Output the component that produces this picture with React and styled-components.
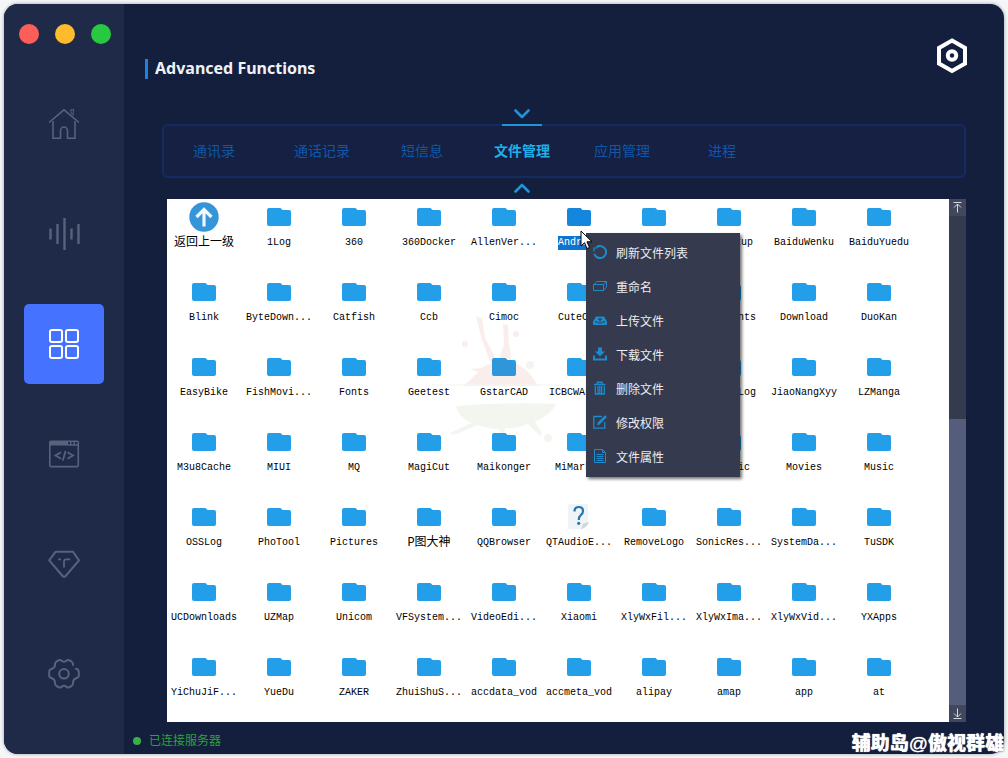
import React from "react";
import styled, { createGlobalStyle, css } from "styled-components";

const sans = `"Liberation Sans", "Noto Sans CJK SC", sans-serif`;

const Global = createGlobalStyle`
  *, *::before, *::after { box-sizing: border-box; }
  body { margin: 0; background: #f4f6f7; font-family: ${sans}; }
  button { margin: 0; padding: 0; border: 0; background: none; font-family: inherit; color: inherit; }
`;

const Page = styled.div`
  min-height: 100vh;
  padding: 4px;
  display: flex;
`;

const Window = styled.div`
  position: relative;
  flex: 1;
  display: flex;
  border-radius: 14px;
  background: #141f3d;
  box-shadow: 0 0 3px 1px #b9c2c4;
`;

const Sidebar = styled.aside`
  flex: 0 0 120px;
  display: flex;
  flex-direction: column;
  align-items: center;
  gap: 40px;
  padding: 20px 0;
  background: #1f2a48;
  border-radius: 14px 0 0 14px;
`;

const Lights = styled.div`
  display: flex;
  gap: 16px;
  align-self: flex-start;
  padding-left: 15px;
`;

const Light = styled.button`
  width: 20px;
  height: 20px;
  border-radius: 50%;
  background: ${(p) => p.$color};
`;

const Nav = styled.nav`
  display: flex;
  flex-direction: column;
  gap: 30px;
`;

const NavButton = styled.button`
  width: 80px;
  height: 80px;
  display: grid;
  place-items: center;
  border-radius: 5px;
  color: ${(p) => (p.$active ? "#fff" : "#58627d")};
  background: ${(p) => (p.$active ? "#4572fe" : "transparent")};
  svg { display: block; fill: none; stroke: currentColor; }
`;

const Main = styled.main`
  flex: 1;
  min-width: 0;
  display: flex;
  flex-direction: column;
`;

const Header = styled.header`
  display: flex;
  justify-content: space-between;
  align-items: flex-start;
  min-height: 120px;
  padding: 34px 36px 0 21px;
`;

const Title = styled.h1`
  margin: 21px 0 0;
  padding-left: 7px;
  border-left: 3px solid #1b82e8;
  font: 700 16px/18px "Noto Sans", "Open Sans", sans-serif;
  padding-bottom: 2px;
  color: #eef2f8;
`;

const HexButton = styled.button`
  svg { display: block; }
`;

const Tabs = styled.nav`
  display: flex;
  margin: 0 38px;
  height: 54px;
  border: 2px solid #142b62;
  border-radius: 6px;
  background: #152042;
`;

const Tab = styled.button`
  position: relative;
  width: 100px;
  font-size: 14px;
  line-height: 20px;
  color: #1057a8;
  &:first-child { margin-right: 8px; }
  ${(p) =>
    p.$active &&
    css`
      color: #1fb0e8;
      font-weight: 700;
      &::before {
        content: "";
        position: absolute;
        top: -2px;
        left: 30px;
        width: 40px;
        height: 2px;
        background: #2094d8;
      }
    `}
`;

const Chevron = styled.svg`
  position: absolute;
  left: 42px;
  ${(p) => (p.$up ? "bottom: -17px;" : "top: -17px;")}
  fill: none;
  stroke: #2094d8;
  stroke-width: 2.6;
  stroke-linecap: round;
  stroke-linejoin: round;
`;

const Panel = styled.section`
  position: relative;
  display: flex;
  margin: 21px 38px 0 43px;
  background: #fff;
`;

const Files = styled.div`
  flex: 1;
  display: grid;
  grid-template-columns: repeat(10, 75px);
  grid-auto-rows: 75px;
  margin-bottom: -2px;
`;

const File = styled.button`
  display: flex;
  flex-direction: column;
  align-items: center;
  gap: 4px;
  padding: 3px 1px 0 0;
`;

const FileIcon = styled.span`
  height: 30px;
  display: grid;
  place-items: center;
  svg { display: block; }
`;

const Label = styled.span`
  font-family: "Liberation Mono", "Noto Sans CJK SC", monospace;
  font-size: ${(p) => (p.$cjk ? "12px" : "10px")};
  line-height: 14px;
  white-space: nowrap;
  color: ${(p) => (p.$selected ? "#fff" : "#000")};
  background: ${(p) => (p.$selected ? "#0e74d0" : "transparent")};
`;

const Scroll = styled.div`
  flex: 0 0 17px;
  display: flex;
  flex-direction: column;
  background: #353b4f;
`;

const ScrollButton = styled.button`
  height: 17px;
  display: grid;
  place-items: center;
  background: #41475d;
  svg { fill: none; stroke: #d6d9e2; }
`;

const Track = styled.div`
  flex: 1;
  display: grid;
  grid-template-rows: 203fr 287fr;
`;

const Thumb = styled.div`
  grid-row: 2;
  background: #545e7c;
`;

const Splash = styled.svg`
  position: absolute;
  left: 265px;
  top: 111px;
  opacity: 0.08;
  pointer-events: none;
`;

const Menu = styled.div`
  position: absolute;
  left: 419px;
  top: 34px;
  width: 154px;
  padding: 2px 0 4px;
  display: flex;
  flex-direction: column;
  background: #353a4e;
  box-shadow: 2px 2px 3px rgba(0, 0, 0, 0.55);
`;

const MenuItem = styled.button`
  height: 34px;
  display: flex;
  align-items: center;
  gap: 9px;
  padding-left: 7px;
  font-size: 12px;
  color: #eceef2;
  svg { display: block; fill: none; stroke: #1b8bcb; }
`;

const Pointer = styled.svg`
  position: absolute;
  left: 413px;
  top: 31px;
  pointer-events: none;
`;

const Status = styled.footer`
  display: flex;
  align-items: center;
  gap: 8px;
  height: 32px;
  margin-top: auto;
  padding: 6px 0 0 9px;
  font-size: 12px;
  line-height: 16px;
  color: #2fa23c;
  &::before {
    content: "";
    width: 8px;
    height: 8px;
    border-radius: 50%;
    background: #3aaf47;
  }
`;

const Signature = styled.div`
  position: absolute;
  right: 0;
  bottom: -4px;
  font-size: 19px;
  line-height: 28px;
  font-weight: 900;
  white-space: nowrap;
  color: #fff;
  text-shadow: 0 0 1px #fff, 0 0 2px #0b1228;
  span { font-weight: 400; }
`;

const icons = {
  home: (
    <svg width="32" height="32" viewBox="0 0 32 32" strokeWidth="1.6">
      <path d="M1 14.5 16 1.8 31 14.5" />
      <path d="M5 13v17.2h7.5V23a3.5 4 0 0 1 7 0v7.2H27V13" />
      <path d="M22.500 1.800h3.500l-.8 2v3.500l-2-1.800V3.500z" strokeWidth="1" />
    </svg>
  ),
  wave: (
    <svg width="32" height="32" viewBox="0 0 32 32" strokeWidth="2.4">
      <path d="M2.5 10.5v11M9.5 6v20M16.5 0v32M23.5 10.5v11M30.5 6v20" />
    </svg>
  ),
  grid: (
    <svg width="32" height="32" viewBox="0 0 32 32" strokeWidth="2">
      <rect x="2" y="2" width="12" height="12" rx="2" />
      <rect x="18" y="2" width="12" height="12" rx="2" />
      <rect x="2" y="18" width="12" height="12" rx="2" />
      <rect x="18" y="18" width="12" height="12" rx="2" />
    </svg>
  ),
  code: (
    <svg width="32" height="32" viewBox="0 0 32 32" strokeWidth="1.6">
      <rect x="1.8" y="3.2" width="28.5" height="25.4" rx="1" />
      <path d="M2 5.500h18" strokeWidth="4" />
      <path d="M20 7h10M22.700 3.500v3.500M26.300 3.500v3.500" strokeWidth="1.400" />
      <path d="M13 14.300 7.500 17.500l5.500 3.200M19.500 14.300l5.500 3.200-5.500 3.200M17.600 13l-2.800 9.500" strokeWidth="1.800" />
    </svg>
  ),
  gem: (
    <svg width="32" height="32" viewBox="0 0 32 32" strokeWidth="2" strokeLinejoin="round">
      <path d="M7.5 3.8h17.5l6 8.6L17.6 28a2 2 0 0 1-3 0L1.2 12.4z" />
      <path d="M10.2 11.3h2.8M16 19.5v-6q0-2.2 2.2-2.2h4" strokeWidth="1.8" />
    </svg>
  ),
  gear: (
    <svg width="32" height="32" viewBox="0 0 32 32" strokeWidth="2" strokeLinecap="round" strokeLinejoin="round">
      <path d="M28 10.800Q30.800 11.500 30.800 14V17.500Q30.800 19.500 28.500 20Q25.500 21 25 24Q25.500 26.500 23.500 28L21 29.300Q19.500 30 18 28.500Q16 27 14 28.500Q12.500 30 11 29.300L8.500 28Q6.500 26.500 7 24Q6.500 21 3.500 20Q1.200 19.500 1.200 17.500V14Q1.200 11.500 3.500 11Q6.500 10 7 7.500Q6.500 5 8.500 3.500L11 2.200Q12.500 1.500 14 3Q16 4.500 18 3Q19.500 1.500 21 2.200L23.500 3.500Q25.200 4.600 25 7" />
      <circle cx="16" cy="15.800" r="4.800" />
    </svg>
  ),
};

const menuIcons = {
  refresh: (
    <svg width="14" height="14" viewBox="0 0 14 14" strokeWidth="2">
      <path d="M1.300 8.800A6 6 0 1 0 3.500 2.200" />
      <path d="M1 6.500V3h3.500" strokeWidth="1.200" />
    </svg>
  ),
  rename: (
    <svg width="14" height="14" viewBox="0 0 14 14">
      <path d="M.5 5.500h10v6H.5zM.8 5.500l2.700-3h10l-3 3M13.500 2.500v5.600l-3 3.300" />
    </svg>
  ),
  upload: (
    <svg width="14" height="14" viewBox="0 0 14 14">
      <path d="M0 8.500 3 3.500h8l3 5V12H0z" fill="#1b8bcb" stroke="none" />
      <path d="M7 8.800V5.500M5 7l2-2 2 2M2 9h2.500l1 1h3l1-1H12" stroke="#353a4e" />
    </svg>
  ),
  download: (
    <svg width="14" height="14" viewBox="0 0 14 14">
      <path d="M5 .5h4V4.500h3L7 9.500 2 4.500h3z" fill="#1b8bcb" stroke="none" />
      <path d="M1 8.500v4h12v-4" strokeWidth="2" />
    </svg>
  ),
  trash: (
    <svg width="14" height="14" viewBox="0 0 14 14">
      <path d="M1 3.500h11.500M4.500 3V1.200h4.500V3" strokeWidth="1.400" />
      <path d="M2.300 5v8h9V5M5 5v8M6.800 5v8M8.600 5v8" strokeWidth="1.300" />
    </svg>
  ),
  edit: (
    <svg width="14" height="14" viewBox="0 0 14 14">
      <path d="M9 1.500H.8v11.700h11V7" strokeWidth="1.300" />
      <path d="M4 10.500l.7-3L12 .2 14 2 6.600 9.600z" fill="#1b8bcb" stroke="none" />
    </svg>
  ),
  doc: (
    <svg width="14" height="14" viewBox="0 0 14 14">
      <path d="M1.500.5h8l3 3v10h-11zM9.500.5v3h3M3.500 5.500H10.500M3.500 7.500H10.500M3.500 9.500H10.500M3.500 11.500H10.500" />
    </svg>
  ),
};

const navItems = [
  ["home", "Home"],
  ["wave", "Audio"],
  ["grid", "Functions"],
  ["code", "Code"],
  ["gem", "Premium"],
  ["gear", "Settings"],
];

const tabs = ["通讯录", "通话记录", "短信息", "文件管理", "应用管理", "进程"];

const menuItems = [
  ["refresh", "刷新文件列表"],
  ["rename", "重命名"],
  ["upload", "上传文件"],
  ["download", "下载文件"],
  ["trash", "删除文件"],
  ["edit", "修改权限"],
  ["doc", "文件属性"],
];

const files = `返回上一级 1Log 360 360Docker AllenVer... Android - MyBackup BaiduWenku BaiduYuedu
Blink ByteDown... Catfish Ccb Cimoc CuteCut - Documents Download DuoKan
EasyBike FishMovi... Fonts Geetest GstarCAD ICBCWALLET - JDMallLog JiaoNangXyy LZManga
M3u8Cache MIUI MQ MagiCut Maikonger MiMarket - MiMusic Movies Music
OSSLog PhoTool Pictures P图大神 QQBrowser QTAudioE... RemoveLogo SonicRes... SystemDa... TuSDK
UCDownloads UZMap Unicom VFSystem... VideoEdi... Xiaomi XlyWxFil... XlyWxIma... XlyWxVid... YXApps
YiChuJiF... YueDu ZAKER ZhuiShuS... accdata_vod accmeta_vod alipay amap app at`.split(/\s+/);

const Folder = ({ selected }) => (
  <svg width="24" height="18" viewBox="0 0 24 18">
    <path
      d="M2 0h11.500l2 2H22a2 2 0 0 1 2 2v12a2 2 0 0 1-2 2H2a2 2 0 0 1-2-2V2a2 2 0 0 1 2-2z"
      fill={selected ? "#1486de" : "#239fea"}
    />
  </svg>
);

const UpIcon = () => (
  <svg width="30" height="30" viewBox="0 0 30 30">
    <circle cx="15" cy="15" r="14.700" fill="#3595d9" />
    <path d="M15 24.500V8M7.500 15 15 7.500l7.500 7.500" fill="none" stroke="#eef8fd" strokeWidth="3.200" />
  </svg>
);

const UnknownIcon = () => (
  <svg width="24" height="28" viewBox="0 0 24 28">
    <path d="M1 1h20v19l-6 6H1z" fill="#f1f4f7" />
    <path d="M22 19q-1 5-8 7.500l2-6z" fill="#d3d6da" />
    <path d="M7.500 8.500q0-4.500 4.300-4.500 4.200 0 4.200 4 0 2.600-2.200 4.200-2 1.500-2 4.800" fill="none" stroke="#2377ad" strokeWidth="2.200" />
    <circle cx="11.700" cy="20.300" r="1.600" fill="#2377ad" />
  </svg>
);

const fileIcon = (name) => {
  if (name === "返回上一级") return <UpIcon />;
  if (name === "QTAudioE...") return <UnknownIcon />;
  return <Folder selected={name === "Android"} />;
};

export default function App() {
  return (
    <Page>
      <Global />
      <Window>
        <Sidebar>
          <Lights>
            <Light $color="#fd5e57" aria-label="Close" />
            <Light $color="#febb2e" aria-label="Minimize" />
            <Light $color="#28c941" aria-label="Zoom" />
          </Lights>
          <Nav>
            {navItems.map(([icon, label]) => (
              <NavButton key={icon} aria-label={label} $active={icon === "grid"}>
                {icons[icon]}
              </NavButton>
            ))}
          </Nav>
        </Sidebar>
        <Main>
          <Header>
            <Title>Advanced Functions</Title>
            <HexButton aria-label="Options">
              <svg width="32" height="36" viewBox="0 0 32 36" fill="none" stroke="#fff">
                <path d="M16 2.500 29 10v15.500L16 33 3 25.500V10z" strokeWidth="4" />
                <circle cx="16" cy="17.500" r="4.200" strokeWidth="4" />
              </svg>
            </HexButton>
          </Header>
          <Tabs>
            {tabs.map((name) => {
              const active = name === "文件管理";
              return (
                <Tab key={name} $active={active}>
                  {name}
                  {active && (
                    <>
                      <Chevron width="16" height="10" viewBox="0 0 16 10">
                        <path d="M1.500 1.500 8 8l6.500-6.500" />
                      </Chevron>
                      <Chevron $up width="16" height="10" viewBox="0 0 16 10">
                        <path d="M1.500 8.500 8 2l6.500 6.500" />
                      </Chevron>
                    </>
                  )}
                </Tab>
              );
            })}
          </Tabs>
          <Panel>
            <Files>
              {files.map((name, i) => (
                <File key={i}>
                  <FileIcon>{fileIcon(name)}</FileIcon>
                  {name !== "-" && (
                    <Label $selected={name === "Android"} $cjk={/[^\x00-\x7f]/.test(name)}>
                      {name}
                    </Label>
                  )}
                </File>
              ))}
            </Files>
            <Scroll>
              <ScrollButton aria-label="Scroll to top">
                <svg width="11" height="11" viewBox="0 0 11 11">
                  <path d="M1.500.5h8M5.500 10.500V2M2 5.500 5.500 2 9 5.500" />
                </svg>
              </ScrollButton>
              <Track>
                <Thumb />
              </Track>
              <ScrollButton aria-label="Scroll to bottom">
                <svg width="11" height="11" viewBox="0 0 11 11">
                  <path d="M1.500 10.500h8M5.500.5V9M2 5.500 5.500 9 9 5.500" />
                </svg>
              </ScrollButton>
            </Scroll>
            <Splash width="140" height="140" viewBox="0 0 140 140">
              <g fill="#c9342f">
                <path d="M32 76q8-8 14-14l-8-3 12-1q5-4 9-4L50 30 44 6l6 2 3 20 13 25 6-19-1-20 5 1 1 19 3 19q14 2 26 23z" />
                <circle cx="33" cy="34" r="3" />
                <circle cx="84" cy="24" r="3" />
              </g>
              <g fill="#6c9a3a">
                <circle cx="98" cy="55" r="4" />
                <path d="M24 96q48-4 100-2-6 13-26 19-12 6-22 5l-14 1q-18-3-28-9-8-5-10-14z" />
                <path d="M46 110l-28 13 4 2 30-13zM66 114l4 18 4-18zM92 110l16 16 2-3-10-16z" />
                <circle cx="116" cy="128" r="4" />
              </g>
              <path d="M0 75h136" stroke="#6c9a3a" strokeWidth="2" opacity=".5" />
            </Splash>
            <Menu role="menu">
              {menuItems.map(([icon, label]) => (
                <MenuItem key={icon} role="menuitem">
                  {menuIcons[icon]}
                  {label}
                </MenuItem>
              ))}
            </Menu>
            <Pointer width="13" height="20" viewBox="0 0 13 20">
              <path d="M1 1v15l3.500-3.300L7 18.500l2.500-1.100L7 11.800h5z" fill="#fff" stroke="#000" />
            </Pointer>
          </Panel>
          <Status>已连接服务器</Status>
        </Main>
        <Signature>
          辅助岛<span>@</span>傲视群雄
        </Signature>
      </Window>
    </Page>
  );
}
